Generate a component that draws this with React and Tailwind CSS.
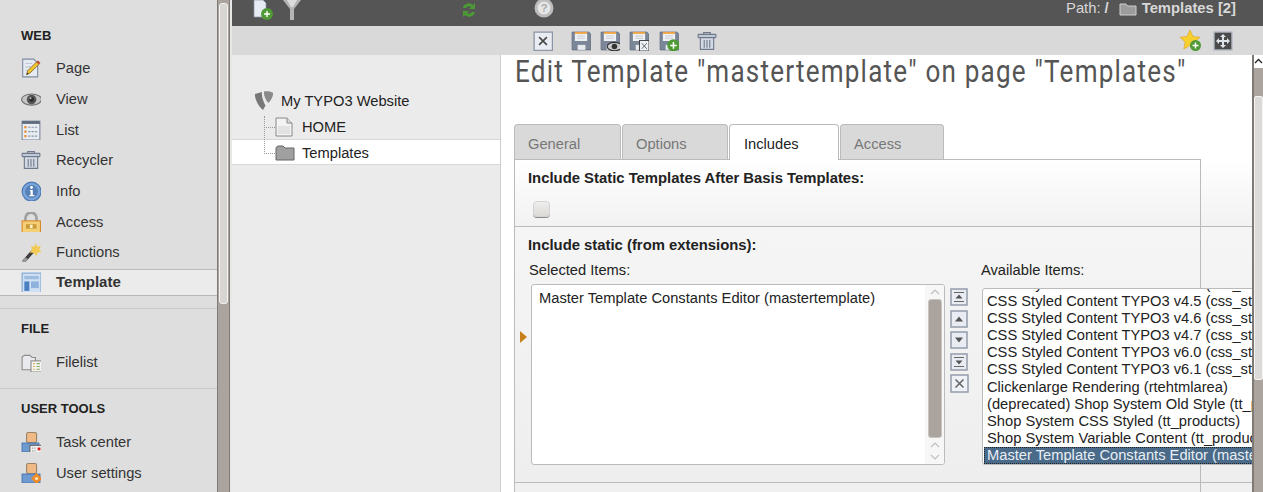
import React from 'react'

const Box = ({ children, size = 18, className = '' }) => (
    <svg width={size} height={size} viewBox="0 0 18 18" className={`shrink-0 ${className}`}>{children}</svg>
)

const PlusBadge = ({ x = 12, y = 13, r = 5 }) => (
    <g>
        <circle cx={x} cy={y} r={r} fill="#4f9a35" />
        <path d={`M${x - 3} ${y}h6M${x} ${y - 3}v6`} stroke="#fff" strokeWidth="1.4" />
    </g>
)

const icons = {
    page: (
        <Box size={20}>
            <path d="M1.500 1h10l3.500 3.500V17H1.500z" fill="#e6ebf3" stroke="#7f8ba0" />
            <path d="M4 5h6M4 8h5M4 11h3" stroke="#c0c6d0" />
            <path d="M5 15l1-3.500L14 3.500l2.200 2.200-8 7.700z" fill="#f4c430" stroke="#7a6018" strokeWidth=".7" />
            <path d="M14 3.500l1.300-1.300 2.200 2.200-1.300 1.300z" fill="#c8442e" />
            <path d="M5 15l.6-2 1.400 1.400z" fill="#333" />
        </Box>
    ),
    view: (
        <Box size={20}>
            <ellipse cx="9.500" cy="9.500" rx="9" ry="5" fill="#c4c4c4" stroke="#6c6c6c" />
            <circle cx="9.500" cy="9.500" r="4.300" fill="#555" />
            <circle cx="9.500" cy="9.500" r="2.200" fill="#2c2c2c" />
            <circle cx="8.500" cy="8.300" r="1" fill="#aaa" />
        </Box>
    ),
    list: (
        <Box size={20}>
            <rect x="1" y="1" width="16" height="17" fill="#e8ecf3" stroke="#7f8ba0" />
            <rect x="1" y="1" width="16" height="2.500" fill="#5f6a7a" />
            <path d="M3 6.500h2M3 10.500h2M3 14.500h2" stroke="#f08a24" strokeWidth="2" />
            <path d="M6.500 6.500h8M6.500 10.500h8M6.500 14.500h8" stroke="#8a95a6" strokeDasharray="2 1" />
        </Box>
    ),
    trash: (
        <Box size={20}>
            <path d="M6 3V1.500h6V3" fill="none" stroke="#6f7a8c" />
            <rect x="1" y="3" width="16" height="3" rx=".5" fill="#c0c9d6" stroke="#6f7a8c" />
            <path d="M3 6h12v10.500H3z" fill="#d4dae3" stroke="#6f7a8c" />
            <path d="M6.500 8v7M9 8v7M11.500 8v7" stroke="#6f7a8c" />
        </Box>
    ),
    info: (
        <Box size={20}>
            <circle cx="9.500" cy="9.500" r="8.500" fill="#7ba5d8" stroke="#4a78b4" />
            <circle cx="9.500" cy="9.500" r="5.800" fill="#5580b8" />
            <circle cx="9.500" cy="5.800" r="1.300" fill="#fff" />
            <path d="M8 8h2.600v4.500H12v1.200H7.500v-1.200h1.100V9.200H8z" fill="#fff" />
        </Box>
    ),
    lock: (
        <Box size={20}>
            <path d="M4 9V5.500a5 5 0 0 1 10 0V9" fill="none" stroke="#a0a0a0" strokeWidth="2.400" />
            <rect x="1" y="8" width="16.500" height="10.500" fill="#f5cf76" stroke="#d8882a" />
            <rect x="4.500" y="11" width="9.500" height="4" fill="#c99a38" />
            <rect x="8" y="11.500" width="2.500" height="3" fill="#fff0c8" />
        </Box>
    ),
    wand: (
        <Box size={20}>
            <path d="M2 18L11 8" stroke="#3c3c3c" strokeWidth="3" />
            <path d="M2 18l3-3.400" stroke="#999" strokeWidth="3" />
            <path d="M13 1l1.500 3 3.500-.5-1.500 3 2 2.500-3.500.5-1 3-2.500-2.500L8 9.500l2-3-1-3 3 .8z" fill="#f3cb52" />
        </Box>
    ),
    template: (
        <Box size={20}>
            <rect x="1" y="1" width="17" height="18" fill="#cfe0f4" stroke="#7fa4d2" />
            <rect x="3" y="3.500" width="13" height="3" fill="#9dbce0" />
            <rect x="3" y="8.500" width="4.500" height="8.500" fill="#4b7fc0" />
            <rect x="9" y="8.500" width="7" height="6" fill="#8fb2dc" />
        </Box>
    ),
    filelist: (
        <Box size={20}>
            <path d="M1 16V4.500L3 3h5l2 2h3v11z" fill="#e8eaed" stroke="#8c8c8c" />
            <rect x="9" y="8" width="10" height="10" fill="#f4f4f0" stroke="#8c8c8c" />
            <path d="M11 10.500h1.500M11 13h1.500M11 15.500h1.500" stroke="#d9a23c" />
            <path d="M14 10.500h3M14 13h3M14 15.500h3" stroke="#8aa868" />
        </Box>
    ),
    task: (
        <Box size={20}>
            <rect x="5" y="0.500" width="9" height="9" rx="1.500" fill="#f0b985" stroke="#9a8468" />
            <rect x="1" y="10" width="15" height="8" fill="#6e9ad0" stroke="#4a78b4" />
            <rect x="8" y="12" width="11" height="8" fill="#f0f0f0" stroke="#666" />
            <rect x="15" y="14" width="2.500" height="2.500" fill="#e01818" />
            <path d="M10 14.500h3M10 17h3" stroke="#999" strokeDasharray="1 1" />
        </Box>
    ),
    user: (
        <Box size={20}>
            <rect x="5" y="0.500" width="9" height="9" rx="1.500" fill="#f0b985" stroke="#9a8468" />
            <rect x="1" y="10" width="16" height="8" fill="#6e9ad0" stroke="#4a78b4" />
            <path d="M14 9l5 5-5 5-5-5z" fill="#f08a24" />
            <circle cx="14" cy="14" r="1.500" fill="#fde2b8" />
        </Box>
    ),
}

const Disk = ({ children }) => (
    <Box size={20}>
        <path d="M1 1h15l2 2v14H1z" fill="#7b8798" stroke="#667080" strokeWidth=".8" />
        <path d="M3.500 1h11v8h-11z" fill="#eef0f3" />
        <path d="M3.500 1h11v1.500h-11z" fill="#ef9a2e" />
        <path d="M5.500 4.500h7M5.500 6.500h7" stroke="#c5cad2" />
        <rect x="6" y="12.500" width="7" height="4.500" fill="#e6e9ee" />
        {children}
    </Box>
)

const SmallX = () => (
    <g>
        <rect x="9.500" y="8.500" width="8.500" height="9.500" fill="#eef1f6" stroke="#333" strokeWidth=".8" />
        <path d="M11.500 11l4.500 5M16 11l-4.500 5" stroke="#555" strokeWidth=".8" />
    </g>
)

const CloseBtn = () => (
    <Box size={20}>
        <rect x="1" y="1" width="16.500" height="16.500" fill="#e9edf3" stroke="#8d96a6" strokeWidth="1.200" />
        <path d="M5.500 5.500l7 7M12.500 5.500l-7 7" stroke="#4a4a4a" strokeWidth="1.500" />
    </Box>
)

const webItems = [
    ['Page', icons.page],
    ['View', icons.view],
    ['List', icons.list],
    ['Recycler', icons.trash],
    ['Info', icons.info],
    ['Access', icons.lock],
    ['Functions', icons.wand],
]

function SideItem({ icon, label }) {
    return (
        <div className="h-[30.700px] flex items-center pl-[21px] gap-[15px] text-[14.700px] text-[#333]">
            <span className="w-[20px] h-[20px] flex">{icon}</span>
            <span>{label}</span>
        </div>
    )
}

function Sidebar() {
    return (
        <div className="w-[217px] shrink-0 h-full bg-[#dedede] overflow-hidden">
            <div className="pl-[21px] pt-[28px] h-[53px] text-[13px] font-bold text-[#222] leading-[16px]">WEB</div>
            {webItems.map(([label, icon]) => (
                <SideItem key={label} icon={icon} label={label} />
            ))}
            <div className="h-[27px] mt-px bg-[#ebebeb] border-y border-[#b8b8b8] flex items-center pl-[21px] gap-[15px] text-[15px] font-bold text-[#333]">
                <span className="w-[20px] h-[20px] flex">{icons.template}</span>
                <span>Template</span>
            </div>
            <div className="mt-[12px] border-t border-[#c8c8c8] h-[80px]">
                <div className="pl-[21px] pt-[12px] h-[38px] text-[13px] font-bold text-[#222] leading-[16px]">FILE</div>
                <div className="h-[30px] flex items-center pl-[21px] gap-[15px] text-[14.700px] text-[#333]">
                    <span className="w-[20px] h-[20px] flex">{icons.filelist}</span>
                    <span>Filelist</span>
                </div>
            </div>
            <div className="border-t border-[#c8c8c8]">
                <div className="pl-[21px] pt-[12px] h-[38px] text-[13px] font-bold text-[#222] leading-[16px]">USER TOOLS</div>
                <SideItem icon={icons.task} label="Task center" />
                <SideItem icon={icons.user} label="User settings" />
            </div>
        </div>
    )
}

function SideScroll() {
    return (
        <div className="w-[13px] shrink-0 h-full bg-[#aaa39e] border-x border-[#7f7a75] pt-[3px] px-px">
            <div className="h-[301px] bg-[#d8d6d3] border border-[#f2f1ef] rounded-[3px]"></div>
        </div>
    )
}

function TopBar() {
    return (
        <div className="h-[26px] bg-[#555] flex items-start text-[14.800px] text-[#d8d8d8] overflow-hidden">
            <svg width="20" height="20" viewBox="0 0 20 20" className="ml-[21px]">
                <path d="M1 0h9l3 3v14H1z" fill="#e6ebf4" stroke="#8b97ab" strokeWidth=".7" />
                <PlusBadge x={14} y={14} r={6} />
            </svg>
            <svg width="20" height="20" viewBox="0 0 20 20" className="ml-[9px]">
                <path d="M1 0h18l-7 9v11H8V9z" fill="#b4b4b4" />
                <path d="M5 0h10l-4 7H9z" fill="#dcdcdc" />
            </svg>
            <svg width="16" height="20" viewBox="0 0 16 20" className="ml-[159px]">
                <path d="M2 8a6 6 0 0 1 10-3l2-2v6H8l2-2a3.500 3.500 0 0 0-5 1z" fill="#4c9a35" />
                <path d="M14 12a6 6 0 0 1-10 3l-2 2v-6h6l-2 2a3.500 3.500 0 0 0 5-1z" fill="#4c9a35" />
            </svg>
            <svg width="20" height="20" viewBox="0 0 20 20" className="ml-[57px] -mt-[2px]">
                <circle cx="10" cy="10" r="9.500" fill="#bdbdbd" />
                <circle cx="10" cy="10" r="6.500" fill="#e6e6e6" />
                <text x="10" y="14" fontSize="11" fontWeight="700" textAnchor="middle" fill="#aaa" fontFamily="Liberation Sans">?</text>
            </svg>
            <div className="ml-auto pr-[27px] flex items-center h-[17px]">
                <span>Path:</span>
                <span className="font-bold ml-[4px]">/</span>
                <svg width="18" height="14" viewBox="0 0 18 14" className="ml-[10px]">
                    <path d="M1 13V2h6l1.500 2H17v9z" fill="#9c9c9c" stroke="#cfcfcf" />
                </svg>
                <span className="font-bold ml-[5px]">Templates [2]</span>
            </div>
        </div>
    )
}

function ToolBar() {
    return (
        <div className="h-[29px] bg-[#d9d9d9] flex items-center">
            <div className="ml-[301px] flex items-center">
                <CloseBtn />
                <div className="ml-[18px]"><Disk /></div>
                <div className="ml-[9px]">
                    <Disk>
                        <ellipse cx="13" cy="14" rx="6.500" ry="3.800" fill="#ccc" stroke="#333" />
                        <circle cx="13" cy="14" r="2.500" fill="#333" />
                    </Disk>
                </div>
                <div className="ml-[9px]"><Disk><SmallX /></Disk></div>
                <div className="ml-[10px]"><Disk><PlusBadge x={13} y={13} r={5.500} /></Disk></div>
                <div className="ml-[18px]">{icons.trash}</div>
            </div>
            <div className="ml-auto mr-[30px] flex items-center gap-[11px]">
                <svg width="22" height="22" viewBox="0 0 22 22">
                    <path d="M10 0l3 6.500 7 .8-5.200 4.700 1.400 7-6.200-3.500-6.200 3.500 1.400-7L0 7.300l7-.8z" fill="#f6d02e" stroke="#e0a020" strokeWidth=".6" />
                    <PlusBadge x={15.500} y={15.500} r={5.500} />
                </svg>
                <svg width="20" height="20" viewBox="0 0 20 20">
                    <rect x="1" y="1" width="18" height="18" fill="#4a4a4a" stroke="#b4bac6" strokeWidth="1.400" />
                    <path d="M10 3l3 3h-2v3h3V7l3 3-3 3v-2h-3v3h2l-3 3-3-3h2v-3H6v2l-3-3 3-3v2h3V6H7z" fill="#dfe3ea" />
                </svg>
            </div>
        </div>
    )
}

function Tree() {
    return (
        <div className="w-[268px] shrink-0 h-full bg-[#ebebeb] text-[14.700px] text-[#222] pt-[34px] relative">
            <div className="flex items-center h-[24px] pl-[22px]">
                <svg width="20" height="20" viewBox="0 0 20 20">
                    <path d="M1 3L8 1c-.5 2.500.5 8 3.500 13.500L9 19C4.500 15.500.5 8 1 3z" fill="#777" />
                    <path d="M10 .5c3-.5 8 0 9 1.500.500 3-2.500 8-4.500 10C12 10 9.500 4.500 10 .5z" fill="#8a8a8a" />
                </svg>
                <span className="ml-[7px]">My TYPO3 Website</span>
            </div>
            <div className="flex items-center h-[26px] pt-[2px] pl-[32px]">
                <span className="w-[11px] border-t border-dotted border-[#999]"></span>
                <svg width="18" height="20" viewBox="0 0 18 20">
                    <path d="M1 1h11l5 5v13H1z" fill="#f3f3f3" stroke="#888" />
                    <path d="M12 1v5h5" fill="#ddd" stroke="#888" />
                    <rect x="3" y="9" width="12" height="8" fill="#e2e2e2" />
                </svg>
                <span className="ml-[9px]">HOME</span>
            </div>
            <div className="flex items-center h-[26px] pt-[2px] pl-[32px] bg-white border-y border-[#d8d8d8]">
                <span className="w-[11px] border-t border-dotted border-[#999]"></span>
                <svg width="20" height="16" viewBox="0 0 20 16">
                    <path d="M1 15V2.500L3 1h5l2 2h9v12z" fill="#a0a0a0" stroke="#666" />
                </svg>
                <span className="ml-[7px]">Templates</span>
            </div>
            {/* dotted line of the tree */}
            <span className="absolute left-[32px] top-[61px] h-[36px] border-l border-dotted border-[#999]"></span>
        </div>
    )
}

function Tab({ label, active, w }) {
    return (
        <div className={`${w} rounded-t-[4px] border border-b-0 border-[#bbb] flex items-center text-[14.700px] ${active ? 'h-[36px] pt-[3px] pl-[14px] bg-white text-[#222] -mb-px relative z-10' : 'h-[35px] pt-[4px] pl-[13px] bg-[#d9d9d9] text-[#777]'}`}>
            {label}
        </div>
    )
}

const MoveBtn = ({ d, bar }) => (
    <svg width="18" height="18" viewBox="0 0 18 18">
        <rect x="1" y="1" width="16" height="16" fill="#e9edf3" stroke="#949cab" strokeWidth="1.500" />
        <path d={d} fill="#555" />
        {bar && <path d={bar} stroke="#666" />}
    </svg>
)

function VScroll() {
    return (
        <div className="w-[19px] shrink-0 h-full bg-[#f7f7f7] flex flex-col items-center">
            <svg width="12" height="10" viewBox="0 0 12 10" className="mt-[2px]"><path d="M2 7l4-4 4 4" fill="none" stroke="#c0c0c0" strokeWidth="1.200" /></svg>
            <div className="mt-[2px] w-[14px] h-[139px] bg-[#aaa39e] rounded-[3px] border border-[#c8c4c0]"></div>
            <svg width="12" height="10" viewBox="0 0 12 10" className="mt-[2px]"><path d="M2 7l4-4 4 4" fill="none" stroke="#c0c0c0" strokeWidth="1.200" /></svg>
            <svg width="12" height="10" viewBox="0 0 12 10" className="mt-[2px]"><path d="M2 3l4 4 4-4" fill="none" stroke="#c0c0c0" strokeWidth="1.200" /></svg>
        </div>
    )
}

const available = [
    'CSS Styled Content TYPO3 v4.5 (css_styled_content)',
    'CSS Styled Content TYPO3 v4.6 (css_styled_content)',
    'CSS Styled Content TYPO3 v4.7 (css_styled_content)',
    'CSS Styled Content TYPO3 v6.0 (css_styled_content)',
    'CSS Styled Content TYPO3 v6.1 (css_styled_content)',
    'Clickenlarge Rendering (rtehtmlarea)',
    '(deprecated) Shop System Old Style (tt_products)',
    'Shop System CSS Styled (tt_products)',
    'Shop System Variable Content (tt_products)',
]

function Main() {
    return (
        <div className="flex-1 min-w-0 h-full bg-white border-l border-[#ccc] overflow-hidden text-[14.700px] text-[#222]">
            <div className="h-[69px] pl-[14px]">
                <h1 className="w-[820px] origin-left scale-x-[.814] text-[32px] leading-[32px] text-[#555] tracking-[1.500px] whitespace-nowrap font-['Roboto',sans-serif] font-normal">
                    Edit Template "mastertemplate" on page "Templates"
                </h1>
            </div>
            <div className="pl-[13px] flex items-end gap-[1px] h-[35px] w-[740px]">
                <Tab label="General" w="w-[107px]" />
                <Tab label="Options" w="w-[106px]" />
                <Tab label="Includes" active w="w-[110px]" />
                <Tab label="Access" w="w-[104px]" />
            </div>
            <div className="ml-[13px] border-l border-t border-[#bbb] w-[687px] relative h-[340px]">
                <div className="w-[738px] h-[67px] bg-gradient-to-b from-[#ffffff] to-[#f2f2f2] border-b border-[#bbb] pl-[13px] pt-[10px]">
                    <div className="font-bold text-[14.850px] leading-[16px]">Include Static Templates After Basis Templates:</div>
                    <div className="mt-[15px] ml-[5px] w-[17px] h-[16px] rounded-[4px] bg-gradient-to-b from-[#eeeeee] to-[#dcdad6] border border-[#d4d4d4] shadow-[0_1px_0_#888]"></div>
                </div>
                <div className="w-[738px] h-[256px] bg-gradient-to-b from-[#f5f5f5] to-[#eeeeee] border-b border-[#bbb] pl-[13px] pt-[10px]">
                    <div className="font-bold text-[14.850px] leading-[16px]">Include static (from extensions):</div>
                    <div className="flex items-start mt-[9px]">
                        <div className="w-[417px] shrink-0">
                            <div className="leading-[17px] pl-px">Selected Items:</div>
                            <div className="mt-[5px] ml-[3px] w-[414px] h-[181px] bg-white border border-[#bbb] rounded-[3px] flex overflow-hidden">
                                <div className="flex-1 pl-[7px] pt-[5px] leading-[17px]">Master Template Constants Editor (mastertemplate)</div>
                                <VScroll />
                            </div>
                        </div>
                        <div className="ml-[5px] mt-[26px] w-[27px] shrink-0 flex flex-col gap-[3.500px]">
                            <MoveBtn d="M9 6.500l3.500 4h-7z" bar="M4 4.500h10M4 13.500h10" />
                            <MoveBtn d="M9 6.500l4 5H5z" />
                            <MoveBtn d="M9 11.500l4-5H5z" />
                            <MoveBtn d="M9 11.500l3.500-4h-7z" bar="M4 4.500h10M4 13.500h10" />
                            <svg width="19" height="19" viewBox="0 0 19 19">
                                <rect x="1" y="1" width="17" height="17" fill="#eef1f6" stroke="#949cab" strokeWidth="1.500" />
                                <path d="M5.500 5.500l8 8M13.500 5.500l-8 8" stroke="#666" strokeWidth="1.600" />
                            </svg>
                        </div>
                        <div className="ml-[4px] shrink-0 relative z-20">
                            <div className="leading-[17px]">Available Items:</div>
                            <div className="mt-[9px] ml-px w-[290px] h-[177px] bg-white border border-[#bbb] rounded-[3px] overflow-hidden whitespace-nowrap">
                                <div className="h-[17.100px] leading-[17px] pl-[4px] -mt-[13px]">CSS Styled Content TYPO3 v4.4 (css_styled_content)</div>
                                {available.map((name) => (
                                    <div key={name} className="h-[17.100px] leading-[17px] pl-[4px]">{name}</div>
                                ))}
                                <div className="h-[17px] leading-[15px] pl-[2px] ml-px bg-[#4a6a89] text-[#e8eef4] border border-dotted border-[#222]">Master Template Constants Editor (mastertemplate)</div>
                            </div>
                        </div>
                    </div>
                </div>
                <div className="w-[738px] h-[20px] bg-[#f0f0f0]"></div>
                {/* right edge of the panel, the lists run over it */}
                <span className="absolute left-[685px] top-0 bottom-0 w-px bg-[#bbb] z-10"></span>
                {/* orange marker left of the list */}
                <svg width="7" height="12" viewBox="0 0 7 12" className="absolute left-[5px] top-[171px]">
                    <path d="M0 0l7 6-7 6z" fill="#c8801c" />
                </svg>
            </div>
        </div>
    )
}

function PageScroll() {
    return (
        <div className="w-[11px] shrink-0 h-full bg-[#aaa39e] border-l-2 border-[#7f7a75] flex flex-col">
            <div className="h-[13px] bg-white flex items-center justify-center">
                <svg width="9" height="7" viewBox="0 0 9 7"><path d="M1 5l3.500-3.500L8 5" fill="none" stroke="#222" strokeWidth="1.300" /></svg>
            </div>
            <div className="h-[284px] bg-[#dcdad8] border border-[#f5f4f3] rounded-[2px] mt-[28px]"></div>
        </div>
    )
}

function App() {
    return (
        <div className="h-[492px] w-full flex overflow-hidden bg-white font-['Liberation_Sans',Arial,sans-serif]">
            <Sidebar />
            <SideScroll />
            <div className="w-[2px] shrink-0 bg-[#e8e8e8]"></div>
            <div className="flex-1 min-w-0 flex flex-col">
                <TopBar />
                <ToolBar />
                <div className="flex-1 min-h-0 flex">
                    <Tree />
                    <Main />
                    <PageScroll />
                </div>
            </div>
        </div>
    )
}

export default App
